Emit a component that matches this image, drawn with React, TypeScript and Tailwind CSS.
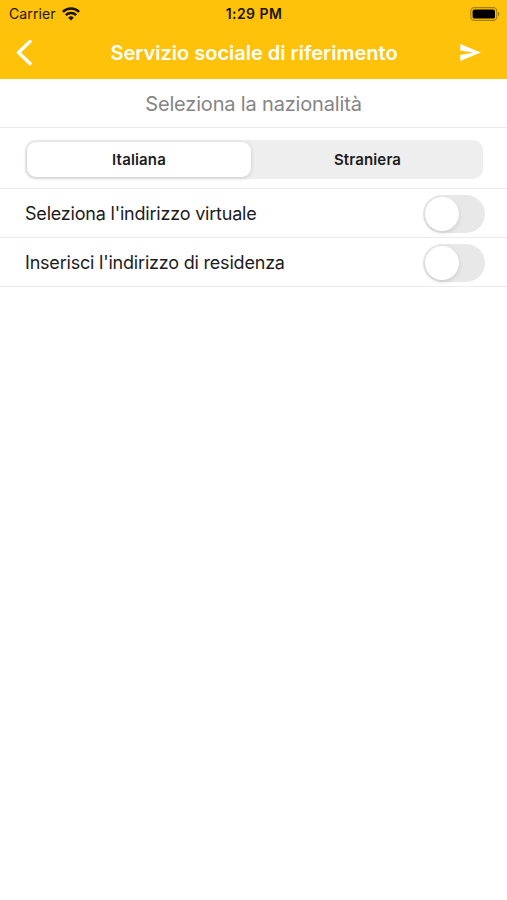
import React, { useState } from 'react';
import clsx from 'clsx';

const WifiIcon: React.FC = () => (
  <svg className="w-[18px] h-[14px]" viewBox="0 0 18 14" fill="none" stroke="#1a1400" strokeWidth="2.5">
    <path d="M0.9 4.9 A11.6 11.6 0 0 1 17.1 4.9" />
    <path d="M3.8 8.1 A7.5 7.5 0 0 1 14.2 8.1" />
    <path d="M9 13.5 L6.2 10.7 A4 4 0 0 1 11.8 10.7 Z" fill="#1a1400" stroke="none" />
  </svg>
);

const BatteryIcon: React.FC = () => (
  <svg className="w-[30px] h-[14px]" viewBox="0 0 30 14">
    <rect x="0.8" y="0.6" width="26" height="12.8" rx="3.6" fill="none" stroke="#a87f06" strokeWidth="1.1" />
    <rect x="2.6" y="2.4" width="22.4" height="9.2" rx="1.9" fill="#000" />
    <path d="M28 4.8 C30 5.6 30 8.4 28 9.2 Z" fill="#a87f06" />
  </svg>
);

const Toggle: React.FC<{ on: boolean; onChange: () => void }> = ({ on, onChange }) => (
  <button
    role="switch"
    aria-checked={on}
    onClick={onChange}
    className={clsx('flex items-center w-[62px] h-[38px] px-[1.5px] rounded-full transition-colors', on ? 'bg-[#ffc20a] justify-end' : 'bg-[#e8e8e8]')}
  >
    <span className="w-[34px] h-[34px] rounded-full bg-white shadow-[0_2px_4px_rgba(0,0,0,0.12)]" />
  </button>
);

const App: React.FC = () => {
  const [nationality, setNationality] = useState('Italiana');
  const [virtual, setVirtual] = useState(false);
  const [residence, setResidence] = useState(false);

  const rows = [
    { label: "Seleziona l'indirizzo virtuale", on: virtual, toggle: () => setVirtual(!virtual) },
    { label: "Inserisci l'indirizzo di residenza", on: residence, toggle: () => setResidence(!residence) },
  ];

  return (
    <div className="min-h-screen bg-white font-['Inter',sans-serif] text-[#1c1c1c]">
      <header className="h-[79px] bg-[#ffc20a]">
        <div className="grid grid-cols-3 items-center h-[27px] pl-[8px] pr-[7px] text-[#1a1400]">
          <div className="flex items-center gap-[6px] pl-px">
            <span className="text-[14px] tracking-[0.1px]">Carrier</span>
            <WifiIcon />
          </div>
          <span className="text-center text-[14px] tracking-[0.45px] font-semibold">1:29 PM</span>
          <div className="flex justify-end"><BatteryIcon /></div>
        </div>
        <div className="grid grid-cols-[60px_1fr_60px] items-center h-[51px] pt-px text-white">
          <button className="pl-[16px]">
            <svg className="w-4 h-[26px]" viewBox="0 0 16 26" fill="none" stroke="white" strokeWidth="3.4" strokeLinecap="round" strokeLinejoin="round">
              <path d="M14 1.6 L2.5 12.6 L14 23.6" />
            </svg>
          </button>
          <h1 className="pl-px text-center text-[20px] font-semibold whitespace-nowrap">Servizio sociale di riferimento</h1>
          <button className="pl-[13px]">
            <svg className="w-[21px] h-[18px]" viewBox="0 0 21 18" fill="white">
              <path d="M0.2 0 L20.8 8.5 L0.2 17 V11 L13.5 8.5 L0.2 6.6 Z" />
            </svg>
          </button>
        </div>
      </header>

      <div className="flex items-center justify-center h-[49px] pt-[2px] border-b border-[#ebebeb] text-[20px] tracking-[-0.17px] text-[#858585]">
        <span>Seleziona la nazionalità</span>
      </div>

      <div className="h-[61px] px-[25px] pt-[12px] border-b border-[#ebebeb]">
        <div className="grid grid-cols-[224px_1fr] h-[39px] w-[458px] p-[2px] rounded-[10px] bg-[#eeeeee]">
          {['Italiana', 'Straniera'].map((name) => (
            <button
              key={name}
              onClick={() => setNationality(name)}
              className={clsx('rounded-[9px] pt-px text-[15px] tracking-[0.15px] font-semibold', nationality === name ? 'bg-white shadow-[0_1px_4px_rgba(0,0,0,0.16)]' : 'pl-[3px]')}
            >
              {name}
            </button>
          ))}
        </div>
      </div>

      {rows.map((row) => (
        <div key={row.label} className="flex items-center justify-between h-[49px] pt-px pl-[25px] pr-[22px] border-b border-[#ebebeb]">
          <span className="text-[18px] tracking-[-0.2px]">{row.label}</span>
          <Toggle on={row.on} onChange={row.toggle} />
        </div>
      ))}
    </div>
  );
};

export default App;
